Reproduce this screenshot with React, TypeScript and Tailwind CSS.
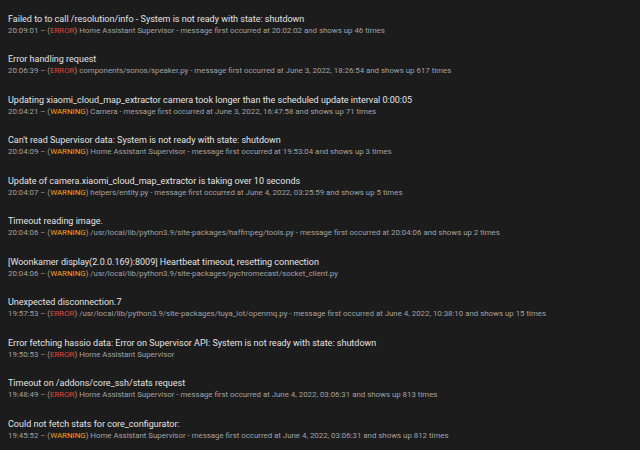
const logs = [
  {
    title: "Failed to to call /resolution/info - System is not ready with state: shutdown",
    time: "20:09:01",
    level: "ERROR",
    rest: "Home Assistant Supervisor - message first occurred at 20:02:02 and shows up 46 times",
  },
  {
    title: "Error handling request",
    time: "20:06:39",
    level: "ERROR",
    rest: "components/sonos/speaker.py - message first occurred at June 3, 2022, 18:26:54 and shows up 617 times",
  },
  {
    title: "Updating xiaomi_cloud_map_extractor camera took longer than the scheduled update interval 0:00:05",
    time: "20:04:21",
    level: "WARNING",
    rest: "Camera - message first occurred at June 3, 2022, 16:47:58 and shows up 71 times",
  },
  {
    title: "Can't read Supervisor data: System is not ready with state: shutdown",
    time: "20:04:09",
    level: "WARNING",
    rest: "Home Assistant Supervisor - message first occurred at 19:53:04 and shows up 3 times",
  },
  {
    title: "Update of camera.xiaomi_cloud_map_extractor is taking over 10 seconds",
    time: "20:04:07",
    level: "WARNING",
    rest: "helpers/entity.py - message first occurred at June 4, 2022, 03:25:59 and shows up 5 times",
  },
  {
    title: "Timeout reading image.",
    time: "20:04:06",
    level: "WARNING",
    rest: "/usr/local/lib/python3.9/site-packages/haffmpeg/tools.py - message first occurred at 20:04:06 and shows up 2 times",
  },
  {
    title: "[Woonkamer display(2.0.0.169):8009] Heartbeat timeout, resetting connection",
    time: "20:04:06",
    level: "WARNING",
    rest: "/usr/local/lib/python3.9/site-packages/pychromecast/socket_client.py",
  },
  {
    title: "Unexpected disconnection.7",
    time: "19:57:53",
    level: "ERROR",
    rest: "/usr/local/lib/python3.9/site-packages/tuya_iot/openmq.py - message first occurred at June 4, 2022, 10:38:10 and shows up 15 times",
  },
  {
    title: "Error fetching hassio data: Error on Supervisor API: System is not ready with state: shutdown",
    time: "19:50:53",
    level: "ERROR",
    rest: "Home Assistant Supervisor",
  },
  {
    title: "Timeout on /addons/core_ssh/stats request",
    time: "19:48:49",
    level: "ERROR",
    rest: "Home Assistant Supervisor - message first occurred at June 4, 2022, 03:06:31 and shows up 813 times",
  },
  {
    title: "Could not fetch stats for core_configurator:",
    time: "19:45:52",
    level: "WARNING",
    rest: "Home Assistant Supervisor - message first occurred at June 4, 2022, 03:06:31 and shows up 812 times",
  },
];

export default function App() {
  return (
    <div className="w-[640px] h-[450px] overflow-hidden bg-[#1c1c1c] pt-[4.6px] font-['Roboto',sans-serif]">
      {logs.map((log, index) => (
        <div key={index} className="h-[40.5px] px-2 flex flex-col justify-center whitespace-nowrap">
          <div className="text-[9px] leading-[12px] text-[#e3e3e3]">{log.title}</div>
          <div className="text-[7.875px] leading-[12px] text-[#a2a2a2]">
            {log.time} – (
            <span className={log.level === "ERROR" ? "text-[#e0473a]" : "text-[#ffa00d]"}>
              {log.level}
            </span>
            ) {log.rest}
          </div>
        </div>
      ))}
    </div>
  );
}
